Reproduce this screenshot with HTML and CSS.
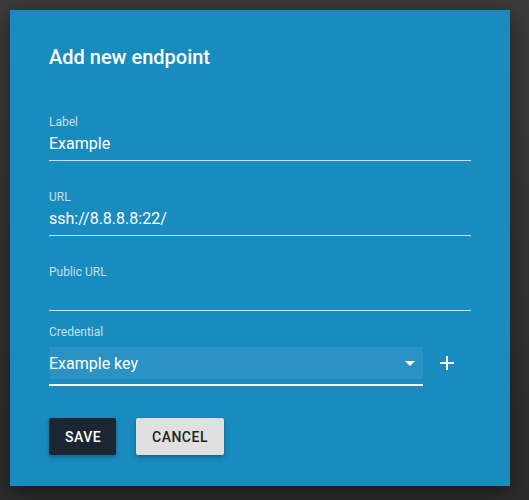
FILE: index.html
```html
<!DOCTYPE html>
<html>
<head>
<meta charset="utf-8">
<link rel="stylesheet" href="styles.css">
</head>
<body>
<div class="dialog">
  <h2 class="title">Add new endpoint</h2>
  <div class="field">
    <div class="label">Label</div>
    <div class="value">Example</div>
  </div>
  <div class="field">
    <div class="label">URL</div>
    <div class="value">ssh://8.8.8.8:22/</div>
  </div>
  <div class="field">
    <div class="label">Public URL</div>
    <div class="value"></div>
  </div>
  <div class="cred">
    <div class="label">Credential</div>
    <div class="cred-row">
      <div class="select">
        <div class="select-box">
          <span>Example key</span>
          <svg class="arrow" width="10" height="5" viewBox="0 0 10 5"><path d="M0 0h10L5 5z" fill="#fff"/></svg>
        </div>
      </div>
      <svg class="plus" width="14" height="14" viewBox="0 0 14 14"><path d="M7 0v14M0 7h14" stroke="#fff" stroke-width="2"/></svg>
    </div>
  </div>
  <div class="actions">
    <button class="btn save">SAVE</button>
    <button class="btn cancel">CANCEL</button>
  </div>
</div>
</body>
</html>
```

FILE: styles.css
```css
html, body {
  margin: 0;
  height: 100%;
}
body {
  background: linear-gradient(#3b3b3b, #2c2c2c);
  font-family: Roboto, "Liberation Sans", sans-serif;
  padding: 10px 0 0 10px;
  box-sizing: border-box;
}
.dialog {
  width: 500px;
  height: 476px;
  box-sizing: border-box;
  background: #1a8bbf;
  padding: 35px 39px 0 39px;
  box-shadow: 0 6px 20px rgba(0,0,0,0.45);
  color: #fff;
}
.title {
  margin: 0;
  font-size: 20px;
  font-weight: 500;
  line-height: 24px;
}
.field {
  margin-top: 46px;
  border-bottom: 1px solid rgba(255,255,255,0.75);
  padding-bottom: 6px;
}
.field + .field {
  margin-top: 29px;
}
.label {
  font-size: 12px;
  line-height: 14px;
  color: rgba(255,255,255,0.75);
}
.value {
  margin-top: 5px;
  font-size: 16px;
  line-height: 20px;
  height: 20px;
}
.cred {
  margin-top: 14px;
}
.cred-row {
  display: flex;
  align-items: center;
  margin-top: 8px;
}
.select {
  width: 374px;
  border-bottom: 2px solid #fff;
  padding-bottom: 5px;
}
.select-box {
  height: 32px;
  background: rgba(255,255,255,0.07);
  display: flex;
  align-items: center;
  justify-content: space-between;
  font-size: 16px;
  padding-right: 8px;
}
.arrow {
  display: block;
}
.plus {
  margin-left: 17px;
  margin-top: -7px;
}
.actions {
  display: flex;
  gap: 20px;
  margin-top: 32px;
}
.btn {
  height: 37px;
  border: none;
  border-radius: 2px;
  font-family: Roboto, "Liberation Sans", sans-serif;
  font-size: 14px;
  font-weight: 500;
  letter-spacing: 0.5px;
  padding: 0 16px;
  box-shadow: 0 2px 4px rgba(0,0,0,0.3);
}
.save {
  background: #1c2632;
  color: #fff;
  width: 67px;
}
.cancel {
  background: #e0e0e0;
  color: #222;
  width: 88px;
}
```
